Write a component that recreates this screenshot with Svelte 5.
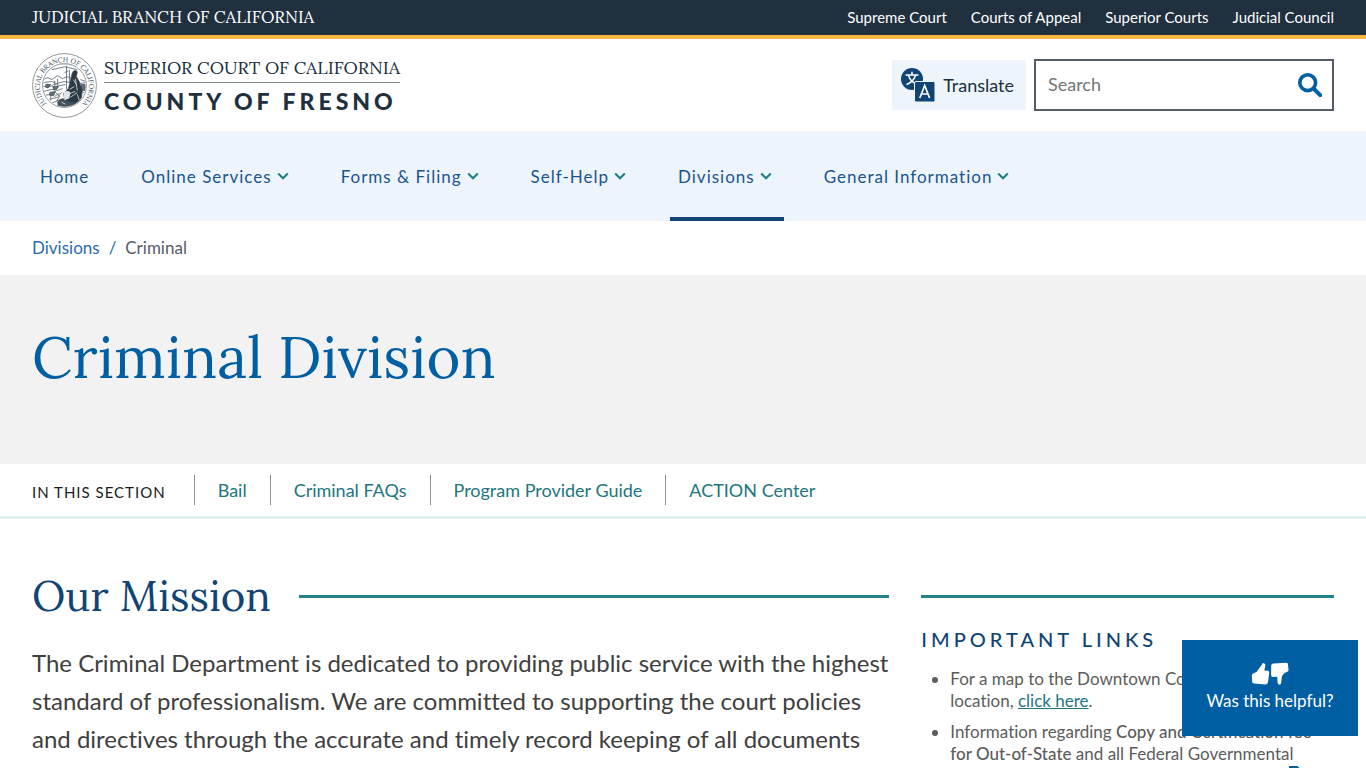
<script>
  const branchLinks = ['Supreme Court', 'Courts of Appeal', 'Superior Courts', 'Judicial Council'];

  const menu = [
    { label: 'Home' },
    { label: 'Online Services', children: true },
    { label: 'Forms & Filing', children: true },
    { label: 'Self-Help', children: true },
    { label: 'Divisions', children: true, active: true },
    { label: 'General Information', children: true }
  ];

  const sectionLinks = ['Bail', 'Criminal FAQs', 'Program Provider Guide', 'ACTION Center'];

  let query = '';
</script>

<div class="branch-bar">
  <a class="branch-name" href="#branch">JUDICIAL BRANCH OF CALIFORNIA</a>
  <nav class="branch-links" aria-label="Judicial branch">
    {#each branchLinks as link}
      <a href="#branch">{link}</a>
    {/each}
  </nav>
</div>

<header class="site-header">
  <a class="brand" href="#home">
    <svg class="seal" viewBox="0 0 66 66" aria-hidden="true">
      <defs>
        <path id="seal-ring" d="M15.5 52 A25 25 0 1 1 50.5 52" />
        <clipPath id="seal-clip"><circle cx="33" cy="33" r="21.5" /></clipPath>
      </defs>
      <circle cx="33" cy="33" r="32.4" fill="#fff" stroke="#5d6973" stroke-width="0.7" />
      <circle cx="33" cy="33" r="22.3" fill="none" stroke="#64707a" stroke-width="0.7" />
      <text class="seal-text"><textPath href="#seal-ring" startOffset="50%" text-anchor="middle">JUDICIAL BRANCH OF CALIFORNIA</textPath></text>
      <g clip-path="url(#seal-clip)" fill="none" stroke="#394955" stroke-width="0.7">
        <path d="M11 27l5-2 4 2 6-4 5 3 5-2 5 2M12 30l8-1 5 2 8-2 5 1M11 34h8l3-2 7 1 5-1M18 15q14-8 29 0M20 17l13-3 13 3" />
        <path d="M12 39l8-2 6 1 5-2M13 43l6-1 4 2 5-3M18 47l8-2 4-5M49 27l6 2M48 31l7-1M49 35h6M50 39l4 2" />
        <path d="M35 13v24M38 17v13M33 20l4-2M23 28v5M26 26v6M16 31v5M24 40l4 4-3 5M19 42v6" />
        <path d="M20 51q13-8 27 1M24 54q9-5 18 0" />
        <path d="M14 32h5l-2 3h-3zM21 34h6l-2 3h-3zM18 40l6-1-2 4h-4zM50 32h4v6h-4z" fill="#62707a" />
        <path d="M41 20q2-4 5-1l-1 5 3 5 3 9-1 10-6 5-8-1-3-6-1-5 5-5 2-8z" fill="#2b3945" />
        <path d="M26 50q3-5 8-3l4 3 6 0 2 4-9 4-10-3z" fill="#42515e" />
        <path d="M38 37l5-3M36 42l8-3M42 27l3 5M39 45l7-5M44 26l2 12M30 50l4 2M46 42l2 6" stroke="#fff" />
        <path d="M32 40q4-3 7 0l-1 6-5 2z" fill="#e1e5e8" stroke="none" />
      </g>
    </svg>
    <span class="brand-text">
      <span class="brand-court">SUPERIOR COURT OF CALIFORNIA</span>
      <span class="brand-county">COUNTY OF FRESNO</span>
    </span>
  </a>

  <div class="tools">
    <button class="translate" type="button">
      <svg width="34" height="34" viewBox="0 0 34 34" aria-hidden="true">
        <circle cx="11" cy="11" r="11" fill="#0f4475" />
        <path d="M4.500 7h13M11 3.800V7M14.500 7.500C13 12 9.500 15 5.500 16.500M7.500 7.500C9 12 12 14.500 15 15.800" fill="none" stroke="#fff" stroke-width="1.500" />
        <rect x="13.500" y="13.500" width="20.500" height="20.500" rx="1.500" fill="#0f4475" stroke="#edf4fb" />
        <path d="M18.800 30l4.900-12.500L28.600 30M20.400 26h6.600" fill="none" stroke="#fff" stroke-width="1.700" />
      </svg>
      Translate
    </button>
    <form class="search" role="search" on:submit|preventDefault>
      <input type="search" placeholder="Search" aria-label="Search" bind:value={query} />
      <button type="submit" aria-label="Submit search">
        <svg width="24" height="24" viewBox="0 0 24 24" fill="none" stroke="#005ea2" aria-hidden="true">
          <circle cx="9.700" cy="9.700" r="7.900" stroke-width="3.600" />
          <path d="M15.500 15.500l6.700 6.700" stroke-width="4" stroke-linecap="round" />
        </svg>
      </button>
    </form>
  </div>
</header>

<nav class="main-nav" aria-label="Main">
  {#each menu as item}
    <a href="#menu" class:active={item.active}>
      {item.label}
      {#if item.children}
        <svg width="12" height="8" viewBox="0 0 12 8" aria-hidden="true">
          <path d="M1.200 1.500L6 6.200l4.800-4.700" fill="none" stroke="#1f7f86" stroke-width="2.100" />
        </svg>
      {/if}
    </a>
  {/each}
</nav>

<nav class="breadcrumb" aria-label="Breadcrumb">
  <a href="#divisions">Divisions</a>
  <span class="slash">/</span>
  <span>Criminal</span>
</nav>

<div class="hero">
  <h1>Criminal Division</h1>
</div>

<nav class="section-nav" aria-label="In this section">
  <span class="section-title">IN THIS SECTION</span>
  <ul>
    {#each sectionLinks as link}
      <li><a href="#section">{link}</a></li>
    {/each}
  </ul>
</nav>

<main>
  <section class="mission">
    <h2>Our Mission</h2>
    <p>
      The Criminal Department is dedicated to providing public service with the highest standard of
      professionalism. We are committed to supporting the court policies and directives through the
      accurate and timely record keeping of all documents
    </p>
  </section>

  <aside>
    <h3>IMPORTANT LINKS</h3>
    <ul>
      <li>For a map to the Downtown Courthouse campus location, <a href="#map">click here</a>.</li>
      <li>
        Information regarding <strong>Copy and Certification fee for Out-of-State</strong> and all
        Federal Governmental <a href="#fees">Agencies, Copy and Certification Fee Notices</a>
        <svg width="12" height="16" viewBox="0 0 12 16" aria-hidden="true">
          <path d="M1 1h7l3 3v11H1z" fill="#fff" stroke="#005ea2" stroke-width="2" />
        </svg>
      </li>
    </ul>
  </aside>
</main>

<button class="feedback" type="button">
  <svg width="38" height="24" viewBox="0 0 38 24" fill="#fff" aria-hidden="true">
    <path d="M2 11.500L5.500 10 11 2.500Q11.500.8 13 1.200q1.800.5 1.300 3L13.300 8.500l3.700.2q1.600.3 1.300 1.900l-1.300 9.600Q16.600 22.400 14.400 22.600L3 21.500Q1.300 21.300 1.200 20L.800 13.500Q.8 12 2 11.500z" />
    <path d="M36.800 9.500L33.500 11 31 14l-.8 6.500q-.3 2.200-1.700 2.200-2 0-2-2.700l-.2-5.200-4.500.2q-1.700-.1-1.700-2L20.200 3.500q.2-2 2.200-2.100L35.500.8q1.200 0 1.400 1.200l.6 5.700Q37.700 9 36.800 9.500z" />
  </svg>
  Was this helpful?
</button>

<style>
  :global(body) {
    background: #fff;
    color: #404040;
    font-family: Lato, 'Liberation Sans', sans-serif;
    font-size: 18px;
    font-variant-ligatures: none;
  }
  a {
    color: inherit;
    text-decoration: none;
  }
  button,
  input {
    border: 0;
    font: inherit;
  }
  button {
    cursor: pointer;
  }
  ul,
  h1,
  h2,
  h3,
  p {
    margin: 0;
    padding: 0;
    font-weight: 400;
  }
  h1,
  h2,
  .branch-name,
  .brand-court,
  .seal-text {
    font-family: Lora, 'Liberation Serif', serif;
  }

  .branch-bar {
    display: flex;
    justify-content: space-between;
    align-items: center;
    box-sizing: border-box;
    height: 39px;
    padding: 0 32px 1px;
    border-bottom: 4px solid #f5b942;
    background: #20303f;
    color: #fff;
  }
  .branch-name {
    font-size: 17px;
  }
  .branch-links {
    display: flex;
    gap: 24px;
    font-size: 15px;
  }

  .site-header {
    display: flex;
    justify-content: space-between;
    align-items: center;
    height: 92px;
    padding: 0 32px;
  }
  .brand {
    display: flex;
    align-items: center;
    gap: 7px;
    color: #20303f;
  }
  .seal {
    width: 65px;
    height: 65px;
  }
  .seal-text {
    font-size: 7px;
    fill: #394955;
  }
  .brand-text {
    display: flex;
    flex-direction: column;
  }
  .brand-court {
    padding: 2px 0;
    border-bottom: 1px solid #7b858d;
    font-size: 18px;
    line-height: 24px;
  }
  .brand-county {
    padding-top: 2px;
    font-size: 23px;
    font-weight: 900;
    line-height: 32px;
    letter-spacing: 4px;
  }

  .tools {
    display: flex;
    align-items: center;
    gap: 8px;
  }
  .translate {
    display: flex;
    align-items: center;
    gap: 8px;
    height: 50px;
    padding: 0 12px 0 9px;
    background: #edf4fb;
    color: #20303f;
  }
  .search {
    display: flex;
    box-sizing: border-box;
    width: 300px;
    height: 52px;
    border: 2px solid #565c65;
  }
  .search input {
    flex: 1;
    min-width: 0;
    padding: 0 12px 2px;
    background: none;
    outline-offset: 2px;
  }
  .search input::placeholder {
    color: #757575;
    opacity: 1;
  }
  .search button {
    display: flex;
    align-items: center;
    padding: 0 10px;
    background: none;
  }

  .main-nav {
    display: flex;
    gap: 32px;
    height: 90px;
    padding: 0 32px;
    background: #edf4fb;
    color: #1a5490;
    font-size: 17px;
  }
  .main-nav a {
    display: flex;
    align-items: center;
    gap: 5px;
    box-sizing: border-box;
    padding: 4px 12px 0 8px;
    border-bottom: 4px solid transparent;
    letter-spacing: 1px;
  }
  .main-nav a.active {
    border-bottom-color: #0f4475;
  }

  .breadcrumb {
    display: flex;
    align-items: center;
    gap: 9px;
    box-sizing: border-box;
    height: 54px;
    padding: 0 32px 2px;
    color: #565c65;
    font-size: 17px;
  }
  .breadcrumb a,
  .slash {
    color: #2a6ab0;
  }

  .hero {
    box-sizing: border-box;
    height: 189px;
    padding: 44px 32px;
    background: #f2f2f2;
  }
  h1 {
    color: #005ea2;
    font-size: 58px;
    line-height: 76px;
  }

  .section-nav {
    display: flex;
    align-items: center;
    height: 52px;
    padding: 0 32px;
    border-bottom: 3px solid #e4f1f1;
    color: #22767e;
  }
  .section-title {
    padding: 4px 28px 0 0;
    color: #1b1b1b;
    font-size: 15px;
    letter-spacing: 1px;
  }
  .section-nav ul {
    display: flex;
    list-style: none;
  }
  .section-nav li {
    padding: 0 23px;
    border-left: 1px solid #8d9297;
    line-height: 30px;
  }

  main {
    display: grid;
    grid-template-columns: repeat(12, 1fr);
    column-gap: 32px;
    padding: 47px 32px;
  }
  .mission {
    grid-column: span 8;
  }
  h2 {
    display: flex;
    align-items: center;
    gap: 28px;
    color: #0f4475;
    font-size: 42px;
    line-height: 60px;
  }
  h2::after {
    content: '';
    flex: 1;
    height: 3px;
    background: #22818a;
  }
  .mission p {
    padding-top: 18px;
    font-size: 24px;
    line-height: 38px;
  }
  aside {
    grid-column: span 4;
    margin-top: 29px;
    border-top: 3px solid #22818a;
    color: #5c5c5c;
    font-size: 17px;
    line-height: 22px;
  }
  h3 {
    padding: 27px 0 15px;
    color: #0f4475;
    font-size: 20px;
    font-weight: 500;
    line-height: 28px;
    letter-spacing: 4px;
  }
  aside ul {
    padding-left: 29px;
  }
  aside li {
    margin-bottom: 9px;
  }
  aside a {
    color: #22767e;
    text-decoration: underline;
  }
  strong {
    font-weight: 500;
  }

  .feedback {
    position: fixed;
    right: 8px;
    bottom: 32px;
    display: flex;
    flex-direction: column;
    align-items: center;
    justify-content: center;
    gap: 4px;
    width: 176px;
    height: 96px;
    padding-bottom: 4px;
    background: #005ea2;
    color: #fff;
    font-size: 17px;
  }
</style>
